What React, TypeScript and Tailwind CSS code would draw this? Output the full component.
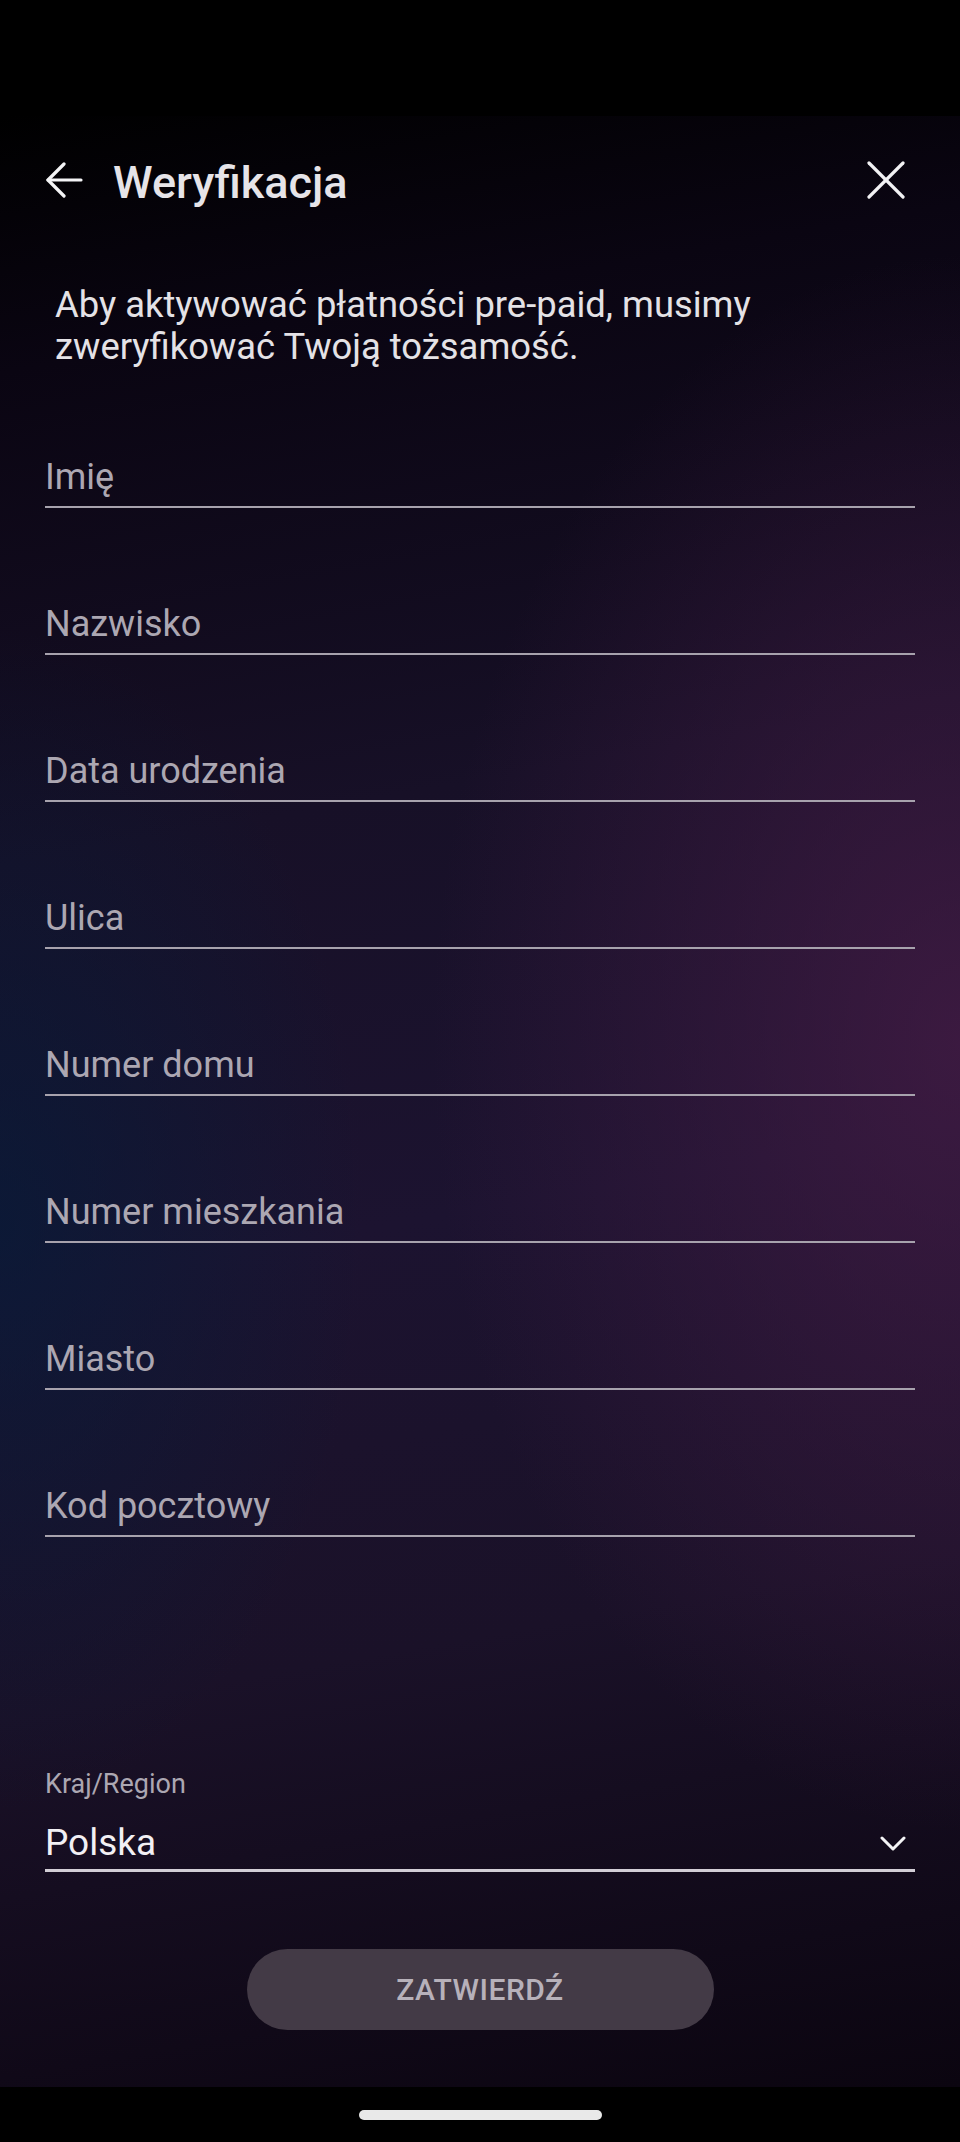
import React from 'react';

const fields = [
  'Imię',
  'Nazwisko',
  'Data urodzenia',
  'Ulica',
  'Numer domu',
  'Numer mieszkania',
  'Miasto',
  'Kod pocztowy',
];

const BackIcon = () => (
  <svg width="38" height="36" viewBox="0 0 38 36" fill="none" stroke="#f4f4f6" strokeWidth="3.2" strokeLinecap="round" strokeLinejoin="round">
    <path d="M36 18H3" />
    <path d="M19 2L3 18l16 16" />
  </svg>
);

const CloseIcon = () => (
  <svg width="38" height="38" viewBox="0 0 38 38" fill="none" stroke="#f2f2f4" strokeWidth="3.2" strokeLinecap="round">
    <path d="M2 2l34 34" />
    <path d="M36 2L2 36" />
  </svg>
);

const Chevron = () => (
  <svg width="26" height="15" viewBox="0 0 26 15" fill="none" stroke="#f4f4f6" strokeWidth="3" strokeLinecap="round" strokeLinejoin="round">
    <path d="M2 2l11 11L24 2" />
  </svg>
);

const Field: React.FC<{ label: string }> = ({ label }) => (
  <div className="border-b-2 border-[#a7a2ad] pb-[7px]">
    <span className="block text-[36px] leading-[44px] text-[#aca7b2]">{label}</span>
  </div>
);

const App: React.FC = () => {
  return (
    <div className="w-[960px] h-[2142px] flex flex-col bg-black font-[Roboto,sans-serif]">
      <div className="h-[116px] shrink-0 bg-black" />

      <div className="flex-1 flex flex-col bg-[radial-gradient(ellipse_55%_40%_at_100%_47%,rgba(70,28,70,0.75),transparent),radial-gradient(ellipse_38%_30%_at_0%_56%,rgba(4,28,58,0.65),transparent),linear-gradient(170deg,#000000_0%,#0a0512_12%,#171027_35%,#1c1330_55%,#1a1128_75%,#0b0510_100%)]">
        <div className="h-[128px] flex items-center pl-[45px] pr-[55px]">
          <BackIcon />
          <h1 className="ml-[30px] pt-[4px] text-[45px] leading-none font-medium text-[#e6e4e8]">Weryfikacja</h1>
          <div className="ml-auto">
            <CloseIcon />
          </div>
        </div>

        <p className="mt-[40px] pl-[55px] pr-[40px] text-[36.4px] leading-[42px] text-[#e4e2e6]">
          Aby aktywować płatności pre-paid, musimy zweryfikować Twoją tożsamość.
        </p>

        <div className="mt-[87px] px-[45px] flex flex-col gap-[94px]">
          {fields.map((f) => (
            <Field key={f} label={f} />
          ))}
        </div>

        <div className="mt-[231px] px-[45px]">
          <span className="block text-[27px] leading-[32px] text-[#aca7b2]">Kraj/Region</span>
          <div className="mt-[21px] flex items-center justify-between border-b-[3px] border-[#d2ced6] pb-[4px]">
            <span className="text-[37px] leading-[44px] text-[#f2f0f4]">Polska</span>
            <div className="mr-[9px]">
              <Chevron />
            </div>
          </div>
        </div>

        <div className="mt-[77px] flex justify-center">
          <button className="w-[467px] h-[81px] rounded-full bg-[#433a46] text-[30px] font-medium tracking-[0.5px] text-[#b7b1ba]">
            ZATWIERDŹ
          </button>
        </div>
      </div>

      <div className="h-[55px] shrink-0 bg-black flex justify-center pt-[23px]">
        <div className="w-[243px] h-[10px] rounded-full bg-[#e9e9e9]" />
      </div>
    </div>
  );
};

export default App;
